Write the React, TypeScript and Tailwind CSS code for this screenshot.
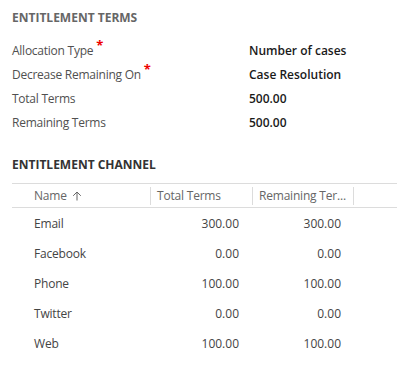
import React from "react";

const font = { fontFamily: '"Segoe UI", "Open Sans", "Noto Sans", sans-serif' };

function Field({ label, value, required }: { label: string; value: string; required?: boolean }) {
  return (
    <div className="flex h-6 items-center pt-[2px]">
      <div className="w-[237px] text-[12px] tracking-[-0.25px] text-[#505050]">
        {label}
        {required && <span className="relative -top-[5px] ml-[3px] text-[13px] font-bold text-[#e00]">*</span>}
      </div>
      <div className="text-[12px] font-semibold text-[#1a1a1a]">{value}</div>
    </div>
  );
}

const rows = [
  ["Email", "300.00", "300.00"],
  ["Facebook", "0.00", "0.00"],
  ["Phone", "100.00", "100.00"],
  ["Twitter", "0.00", "0.00"],
  ["Web", "100.00", "100.00"],
];

export default function App() {
  return (
    <div className="w-[413px] h-[374px] bg-white pl-3 pt-[6px]" style={font}>
      <div className="h-6 flex items-center text-[12px] font-bold text-[#666]">ENTITLEMENT TERMS</div>
      <div className="mt-[8px]">
        <Field label="Allocation Type" value="Number of cases" required />
        <Field label="Decrease Remaining On" value="Case Resolution" required />
        <Field label="Total Terms" value="500.00" />
        <Field label="Remaining Terms" value="500.00" />
      </div>
      <div className="mt-[17px] h-6 flex items-center pt-[3px] text-[12px] font-bold text-[#333]">ENTITLEMENT CHANNEL</div>
      <div className="mt-[8px] w-[385px]">
        <div className="flex h-[25px] border-t border-b border-[#dcdcdc] text-[12px] tracking-[-0.2px] text-[#666]">
          <div className="w-[138px] flex items-center pl-[22px] pt-[1px]">
            Name
            <svg width="10" height="10" viewBox="0 0 10 10" className="ml-[5px]">
              <path d="M5 9.5V1M1.2 4.8L5 1l3.8 3.8" stroke="#666" strokeWidth="1" fill="none" />
            </svg>
          </div>
          <div className="w-[102px] flex items-center">
            <div className="h-[18px] w-px bg-[#dcdcdc]" />
            <span className="pl-[6px] pt-[1px]">Total Terms</span>
          </div>
          <div className="w-[101px] flex items-center">
            <div className="h-[18px] w-px bg-[#dcdcdc]" />
            <span className="pl-[6px] pt-[1px]">Remaining Ter...</span>
          </div>
          <div className="flex-1 flex items-center">
            <div className="h-[18px] w-px bg-[#dcdcdc]" />
          </div>
        </div>
        {rows.map(([n, a, b]) => (
          <div key={n} className="flex h-[30px] items-center pt-[2px] text-[12px] text-[#444]">
            <div className="w-[138px] pl-[22px] tracking-[-0.2px]">{n}</div>
            <div className="w-[102px] text-right pr-[13px]">{a}</div>
            <div className="w-[101px] text-right pr-[12px]">{b}</div>
          </div>
        ))}
      </div>
    </div>
  );
}
